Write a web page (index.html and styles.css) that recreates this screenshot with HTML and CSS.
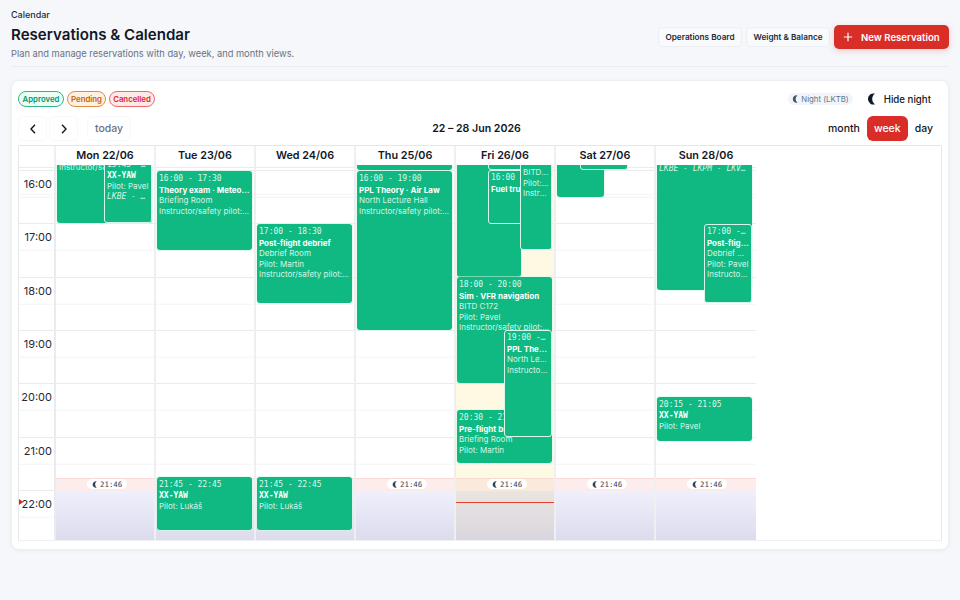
FILE: index.html
```html
<!DOCTYPE html>
<html lang="en">
<head>
  <meta charset="UTF-8" />
  <title>Reservations &amp; Calendar</title>
  <link rel="stylesheet" href="styles.css">
</head>
<body>
  <div class="crumb">Calendar</div>
  <header class="page-head">
    <div>
      <h1>Reservations &amp; Calendar</h1>
      <p>Plan and manage reservations with day, week, and month views.</p>
    </div>
    <div class="head-actions">
      <button class="btn-soft">Operations Board</button>
      <button class="btn-soft">Weight &amp; Balance</button>
      <button class="btn-primary">
        <svg width="10" height="10" viewBox="0 0 10 10"><path d="M5 .8v8.4M.8 5h8.4" stroke="#fff" stroke-width="1.2" fill="none"/></svg>
        New Reservation
      </button>
    </div>
  </header>

  <section class="card">
    <div class="legend-row">
      <div class="legend">
        <span class="chip chip-green">Approved</span>
        <span class="chip chip-orange">Pending</span>
        <span class="chip chip-red">Cancelled</span>
      </div>
      <div class="night-tools">
        <span class="night-chip"><svg class="moon" width="7" height="8" viewBox="0 0 10 12"><path d="M8 .6A5.6 5.6 0 1 0 8 11.4 6.6 6.6 0 0 1 8 .6Z" fill="#475569"/></svg>Night (LKTB)</span>
        <span class="night-toggle"><svg class="moon" width="10" height="12" viewBox="0 0 10 12"><path d="M8 .6A5.6 5.6 0 1 0 8 11.4 6.6 6.6 0 0 1 8 .6Z" fill="#111827"/></svg>Hide night</span>
      </div>
    </div>

    <div class="toolbar">
      <div class="nav-btns">
        <button class="nav-btn"><svg width="8" height="10" viewBox="0 0 8 10"><path d="M6 .8 2 5l4 4.2" stroke="#111827" stroke-width="1.4" fill="none"/></svg></button>
        <button class="nav-btn"><svg width="8" height="10" viewBox="0 0 8 10"><path d="M2 .8 6 5 2 9.2" stroke="#111827" stroke-width="1.4" fill="none"/></svg></button>
        <button class="today-btn">today</button>
      </div>
      <div class="range">22 – 28 Jun 2026</div>
      <div class="views">
        <button>month</button>
        <button class="active">week</button>
        <button>day</button>
      </div>
    </div>

    <div class="calendar">
      <div class="cal-head">
        <div></div>
        <div>Mon 22/06</div>
        <div>Tue 23/06</div>
        <div>Wed 24/06</div>
        <div>Thu 25/06</div>
        <div>Fri 26/06</div>
        <div>Sat 27/06</div>
        <div>Sun 28/06</div>
      </div>
      <div class="cal-body">
        <div class="times">
          <div>16:00</div>
          <div>17:00</div>
          <div>18:00</div>
          <div>19:00</div>
          <div>20:00</div>
          <div>21:00</div>
          <div>22:00</div>
          <span class="now-arrow"></span>
        </div>

        <div class="day">
          <div class="night"></div>
          <div class="night-label"><svg width="6" height="7" viewBox="0 0 10 12"><path d="M8 .6A5.6 5.6 0 1 0 8 11.4 6.6 6.6 0 0 1 8 .6Z" fill="#334155"/></svg>21:46</div>
          <div class="event" style="top:-48px;height:106px;left:2px;width:95px">
            <div class="ev-time">15:00 - 17:00</div><div class="ev-title">Sim · IFR procedures</div><div>BITD C172</div><div>Pilot: Martin</div><div>Instructor/safety pilot: Lukáš</div>
          </div>
          <div class="event bordered" style="top:-8px;height:66px;left:49px;width:48px">
            <div class="ev-time">15:45 - 16:45</div><div class="ev-title mono">XX-YAW</div><div>Pilot: Pavel</div><div class="ev-route">LKBE - LKPM - LKVO</div>
          </div>
        </div>

        <div class="day">
          <div class="night"></div>
          <div class="event" style="top:6px;height:79px;left:2px;width:95px">
            <div class="ev-time">16:00 - 17:30</div><div class="ev-title">Theory exam · Meteorology</div><div>Briefing Room</div><div>Instructor/safety pilot: Lukáš</div>
          </div>
          <div class="event" style="top:312px;height:53px;left:2px;width:95px">
            <div class="ev-time">21:45 - 22:45</div><div class="ev-title mono">XX-YAW</div><div>Pilot: Lukáš</div>
          </div>
        </div>

        <div class="day">
          <div class="night"></div>
          <div class="event" style="top:59px;height:79px;left:2px;width:95px">
            <div class="ev-time">17:00 - 18:30</div><div class="ev-title">Post-flight debrief</div><div>Debrief Room</div><div>Pilot: Martin</div><div>Instructor/safety pilot: Lukáš</div>
          </div>
          <div class="event" style="top:312px;height:53px;left:2px;width:95px">
            <div class="ev-time">21:45 - 22:45</div><div class="ev-title mono">XX-YAW</div><div>Pilot: Lukáš</div>
          </div>
        </div>

        <div class="day">
          <div class="night"></div>
          <div class="night-label"><svg width="6" height="7" viewBox="0 0 10 12"><path d="M8 .6A5.6 5.6 0 1 0 8 11.4 6.6 6.6 0 0 1 8 .6Z" fill="#334155"/></svg>21:46</div>
          <div class="event" style="top:-50px;height:55px;left:2px;width:95px"></div>
          <div class="event" style="top:6px;height:159px;left:2px;width:95px">
            <div class="ev-time">16:00 - 19:00</div><div class="ev-title">PPL Theory · Air Law</div><div>North Lecture Hall</div><div>Instructor/safety pilot: Lukáš</div>
          </div>
        </div>

        <div class="day today">
          <div class="night"></div>
          <div class="night-label"><svg width="6" height="7" viewBox="0 0 10 12"><path d="M8 .6A5.6 5.6 0 1 0 8 11.4 6.6 6.6 0 0 1 8 .6Z" fill="#334155"/></svg>21:46</div>
          <div class="now-line"></div>
          <div class="event" style="top:-60px;height:172px;left:2px;width:64px"></div>
          <div class="event bordered" style="top:-30px;height:35px;left:33px;width:64px"></div>
          <div class="event bordered" style="top:5px;height:54px;left:33px;width:64px">
            <div class="ev-time">16:00 - 17:00</div><div class="ev-title">Fuel truck</div>
          </div>
          <div class="event bordered" style="top:-22px;height:107px;left:65px;width:32px">
            <div class="ev-time">15:30 - 17:30</div><div class="ev-title">Sim</div><div>BITD C172</div><div>Pilot: Pavel</div><div>Instructor</div>
          </div>
          <div class="event" style="top:112px;height:106px;left:2px;width:95px">
            <div class="ev-time">18:00 - 20:00</div><div class="ev-title">Sim · VFR navigation</div><div>BITD C172</div><div>Pilot: Pavel</div><div>Instructor/safety pilot: Lukáš</div>
          </div>
          <div class="event" style="top:245px;height:53px;left:2px;width:95px">
            <div class="ev-time">20:30 - 21:30</div><div class="ev-title">Pre-flight briefing</div><div>Briefing Room</div><div>Pilot: Martin</div>
          </div>
          <div class="event bordered" style="top:165px;height:107px;left:49px;width:48px">
            <div class="ev-time">19:00 - 21:00</div><div class="ev-title">PPL Theory</div><div>North Lecture Hall</div><div>Instructor/safety pilot</div>
          </div>
        </div>

        <div class="day">
          <div class="night"></div>
          <div class="night-label"><svg width="6" height="7" viewBox="0 0 10 12"><path d="M8 .6A5.6 5.6 0 1 0 8 11.4 6.6 6.6 0 0 1 8 .6Z" fill="#334155"/></svg>21:46</div>
          <div class="event" style="top:-40px;height:72px;left:2px;width:47px"></div>
          <div class="event bordered" style="top:-30px;height:35px;left:25px;width:48px"></div>
        </div>

        <div class="day">
          <div class="night"></div>
          <div class="night-label"><svg width="6" height="7" viewBox="0 0 10 12"><path d="M8 .6A5.6 5.6 0 1 0 8 11.4 6.6 6.6 0 0 1 8 .6Z" fill="#334155"/></svg>21:46</div>
          <div class="event" style="top:-36px;height:161px;left:2px;width:95px">
            <div class="ev-time">15:15 - 18:15</div><div class="ev-title mono">XX-YAW</div><div>Pilot: Martin</div><div class="ev-route">LKBE - LKPM - LKVO - LKBE</div>
          </div>
          <div class="event bordered" style="top:59px;height:79px;left:49px;width:48px">
            <div class="ev-time">17:00 - 18:30</div><div class="ev-title">Post-flight debrief</div><div>Debrief Room</div><div>Pilot: Pavel</div><div>Instructor/safety pilot</div>
          </div>
          <div class="event" style="top:232px;height:44px;left:2px;width:95px">
            <div class="ev-time">20:15 - 21:05</div><div class="ev-title mono">XX-YAW</div><div>Pilot: Pavel</div>
          </div>
        </div>
      </div>
    </div>
  </section>
</body>
</html>
```

FILE: styles.css
```css
* {
  box-sizing: border-box;
}
body {
  margin: 0;
  padding: 9px 11px 0;
  height: 600px;
  overflow: hidden;
  font-family: 'Inter', 'Liberation Sans', sans-serif;
  background: #f5f7fb;
  color: #111827;
}
button {
  font-family: inherit;
  cursor: pointer;
}
.crumb {
  font-size: 9px;
  font-weight: 500;
  line-height: 11px;
  color: #1f2937;
}
.page-head {
  display: flex;
  justify-content: space-between;
  align-items: flex-start;
  margin-top: 5px;
  border-bottom: 1px solid #e9ecf1;
  height: 42px;
}
.page-head h1 {
  margin: 0;
  font-size: 15.1px;
  font-weight: 600;
  line-height: 20px;
  color: #111827;
}
.page-head p {
  margin: 2px 0 0;
  font-size: 9.3px;
  line-height: 13px;
  color: #6b7280;
}
.head-actions {
  display: flex;
  align-items: center;
  gap: 4px;
}
.btn-soft {
  height: 20px;
  width: 84px;
  padding: 0;
  border: 1px solid #eceff3;
  border-radius: 4px;
  background: #f8fafc;
  font-size: 8.2px;
  font-weight: 600;
  color: #1f2937;
}
.btn-primary {
  display: flex;
  align-items: center;
  gap: 8px;
  height: 24px;
  width: 115px;
  padding: 0 9px;
  border: none;
  border-radius: 5px;
  background: #d92d27;
  box-shadow: 0 2px 6px rgba(217,45,39,0.22);
  font-size: 9.6px;
  font-weight: 600;
  white-space: nowrap;
  color: #fff;
}
.card {
  margin-top: 13px;
  height: 470px;
  padding: 10px 6px 7px;
  background: #fff;
  border: 1px solid #eceff3;
  border-radius: 8px;
  box-shadow: 0 1px 4px rgba(15,23,42,0.05);
}
.legend-row {
  display: flex;
  justify-content: space-between;
  align-items: center;
  height: 16px;
}
.legend {
  display: flex;
  gap: 3px;
}
.chip {
  display: flex;
  align-items: center;
  justify-content: center;
  height: 16px;
  border-radius: 8px;
  font-size: 7.8px;
  font-weight: 600;
  border: 1px solid;
}
.chip-green {
  width: 46px;
  color: #059669;
  border-color: #34b48c;
  background: #ecfdf5;
}
.chip-orange {
  width: 39px;
  color: #c2610c;
  border-color: #e08a45;
  background: #fff1e0;
}
.chip-red {
  width: 46px;
  color: #dc2626;
  border-color: #ea6a6a;
  background: #fee8e8;
}
.night-tools {
  display: flex;
  align-items: center;
  gap: 14px;
  padding-right: 11px;
}
.night-chip {
  display: flex;
  align-items: center;
  gap: 2px;
  height: 12px;
  padding: 0 4px;
  border-radius: 6px;
  background: #f1f5f9;
  font-size: 7.8px;
  color: #64748b;
}
.night-toggle {
  display: flex;
  align-items: center;
  gap: 7px;
  font-size: 9.7px;
  font-weight: 500;
  color: #111827;
}
.toolbar {
  display: flex;
  justify-content: space-between;
  align-items: center;
  margin-top: 9px;
  height: 25px;
}
.nav-btns {
  display: flex;
  gap: 2px;
  width: 114px;
}
.nav-btn {
  display: flex;
  align-items: center;
  justify-content: center;
  width: 29px;
  height: 25px;
  border: 1px solid #f8f9fa;
  border-radius: 5px;
  background: #fff;
}
.today-btn {
  width: 44px;
  margin-left: 7px;
  padding: 0;
  border: 1px solid #f8f9fa;
  border-radius: 5px;
  background: #fff;
  font-size: 10.5px;
  font-weight: 500;
  color: #6b7280;
}
.range {
  font-size: 10.6px;
  font-weight: 600;
  color: #111827;
}
.views {
  display: flex;
  padding-right: 2px;
}
.views button {
  height: 25px;
  padding: 0 7px;
  border: none;
  border-radius: 6px;
  background: none;
  font-size: 10.5px;
  font-weight: 500;
  color: #111827;
}
.views .active {
  background: #d92d27;
  color: #fff;
}
.calendar {
  margin-top: 4px;
  height: 396px;
  border: 1px solid #e5e7eb;
  border-bottom-color: #eef0f3;
  overflow: hidden;
}
.cal-head,
.cal-body {
  display: grid;
  grid-template-columns: 37px repeat(7, 100px);
}
.cal-head {
  height: 19px;
}
.cal-head div {
  font-size: 10.8px;
  font-weight: 600;
  line-height: 19px;
  text-align: center;
  border-right: 2px solid #eeeff2;
}
.cal-head div:last-child,
.day:last-child {
  border-right: none;
}
.cal-body {
  height: 376px;
  overflow: hidden;
  width: 737px;
}
.times,
.day {
  position: relative;
  height: 376px;
  background-image:
    repeating-linear-gradient(#e9ebef 0 1px, transparent 1px 53.33px),
    repeating-linear-gradient(#f3f4f6 0 1px, transparent 1px 53.33px);
  background-size: 100% 100%;
  background-position: 0 5px, 0 31.7px;
}
.times {
  padding-top: 5px;
  border-right: 2px solid #e9ebef;
}
.times div {
  height: 53.33px;
  line-height: 28px;
  padding-right: 2px;
  font-size: 11px;
  text-align: right;
  color: #1f2937;
}
.now-arrow {
  position: absolute;
  left: 0;
  top: 334px;
  border-left: 4px solid #e11d1d;
  border-top: 3px solid transparent;
  border-bottom: 3px solid transparent;
}
.day {
  border-right: 2px solid #eeeff2;
}
.today {
  background-color: #fef9e3;
}
.night {
  position: absolute;
  left: 0;
  right: 0;
  top: 313px;
  height: 63px;
  background: linear-gradient(#fdeaea 0, #fdeaea 12px, #efeefc 12px, #d8d8ec 100%);
  border-top: 1px solid #f8d5d2;
  opacity: 0.9;
}
.today .night {
  background: linear-gradient(#fbe9dc 0, #fbe9dc 12px, #e9e3e0 12px, #d6d2de 100%);
}
.night-label {
  position: absolute;
  left: 31px;
  top: 314px;
  display: flex;
  align-items: center;
  gap: 2px;
  height: 10px;
  padding: 0 5px;
  border-radius: 5px;
  background: #fff;
  font-family: 'DejaVu Sans Mono', monospace;
  font-size: 7.4px;
  color: #334155;
}
.now-line {
  position: absolute;
  left: 0;
  right: 0;
  top: 337px;
  height: 1px;
  background: #e5402f;
  z-index: 1;
}
.event {
  position: absolute;
  margin-left: -1px;
  padding: 3px 2px;
  overflow: hidden;
  border-radius: 3px;
  background: #10b981;
  box-shadow: 0 0 0 1px rgba(209,250,229,0.5);
  font-size: 8px;
  line-height: 10.5px;
  color: #d5f5e8;
}
.event div {
  white-space: nowrap;
  overflow: hidden;
  text-overflow: ellipsis;
}
.bordered {
  box-shadow: none;
  border: 1px solid #d8f7ea;
  padding: 2px;
  z-index: 2;
}
.event .ev-time {
  font-family: 'DejaVu Sans Mono', 'Liberation Mono', monospace;
  font-size: 8px;
  color: #dcf7ec;
}
.event .ev-title {
  font-weight: 700;
  color: #fff;
}
.event .mono {
  font-family: 'DejaVu Sans Mono', 'Liberation Mono', monospace;
  font-size: 8px;
}
.event .ev-route {
  font-family: 'DejaVu Sans Mono', 'Liberation Mono', monospace;
  font-size: 8px;
  font-style: italic;
}
```
